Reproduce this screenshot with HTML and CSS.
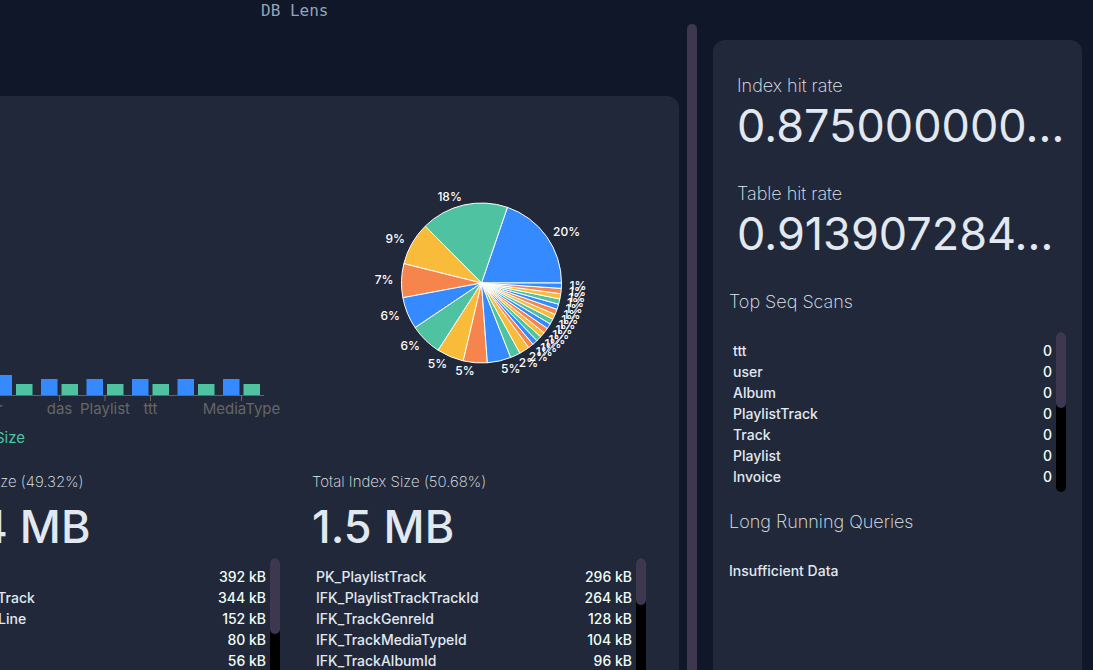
FILE: index.html
```html
<!DOCTYPE html>
<html lang="en">
<head>
<meta charset="utf-8">
<title>DB Lens</title>
<link rel="stylesheet" href="styles.css">
</head>
<body>
<header class="titlebar">DB Lens</header>
<div class="workspace">
  <main class="main">
    <section class="card overview">
      <div class="columns">
        <svg class="chart" id="bars" viewBox="-54 112 334 358" role="img" aria-label="Table and index size per table"></svg>
        <svg class="chart" id="pie" viewBox="312 112 334 358" role="img" aria-label="Share of total size"></svg>
      </div>
      <div class="columns">
        <section>
          <h2 class="label">Table Size (49.32%)</h2>
          <p class="value">1.4 MB</p>
          <div class="list">
            <table class="rows">
              <tr><td>Track</td><td>392 kB</td></tr>
              <tr><td>PlaylistTrack</td><td>344 kB</td></tr>
              <tr><td>InvoiceLine</td><td>152 kB</td></tr>
              <tr><td>Album</td><td>80 kB</td></tr>
              <tr><td>Artist</td><td>56 kB</td></tr>
            </table>
            <div class="track"><div class="thumb"></div></div>
          </div>
        </section>
        <section>
          <h2 class="label">Total Index Size (50.68%)</h2>
          <p class="value">1.5 MB</p>
          <div class="list">
            <table class="rows">
              <tr><td>PK_PlaylistTrack</td><td>296 kB</td></tr>
              <tr><td>IFK_PlaylistTrackTrackId</td><td>264 kB</td></tr>
              <tr><td>IFK_TrackGenreId</td><td>128 kB</td></tr>
              <tr><td>IFK_TrackMediaTypeId</td><td>104 kB</td></tr>
              <tr><td>IFK_TrackAlbumId</td><td>96 kB</td></tr>
            </table>
            <div class="track"><div class="thumb thumb-short"></div></div>
          </div>
        </section>
      </div>
    </section>
  </main>
  <div class="page-scroll"></div>
  <aside class="card sidebar">
    <section class="stat">
      <h2 class="heading">Index hit rate</h2>
      <p class="rate">0.875000000…</p>
    </section>
    <section class="stat">
      <h2 class="heading">Table hit rate</h2>
      <p class="rate">0.913907284…</p>
    </section>
    <h2 class="heading">Top Seq Scans</h2>
    <div class="list">
      <table class="rows">
        <tr><td>ttt</td><td>0</td></tr>
        <tr><td>user</td><td>0</td></tr>
        <tr><td>Album</td><td>0</td></tr>
        <tr><td>PlaylistTrack</td><td>0</td></tr>
        <tr><td>Track</td><td>0</td></tr>
        <tr><td>Playlist</td><td>0</td></tr>
        <tr><td>Invoice</td><td>0</td></tr>
      </table>
      <div class="track"><div class="thumb"></div></div>
    </div>
    <h2 class="heading">Long Running Queries</h2>
    <p class="empty">Insufficient Data</p>
  </aside>
</div>
<script src="charts.js"></script>
</body>
</html>
```
FILE: styles.css
```css
* { box-sizing: border-box; }
body {
  margin: 0;
  height: 100vh;
  overflow: hidden;
  display: flex;
  flex-direction: column;
  background: #101729;
  color: #e2e8f0;
  font-family: Inter, "Liberation Sans", sans-serif;
}
h2, p { margin: 0; }
.titlebar {
  height: 24px;
  padding-left: 261px;
  font: 16px/22px "DejaVu Sans Mono", monospace;
  color: #94a3b8;
}
.workspace { flex: 1; min-height: 0; display: flex; }
.main { flex: 1; min-width: 0; padding: 72px 8px 0 0; overflow: hidden; }
.card { background: #20283a; border-radius: 12px; }
.overview { margin-left: -86px; padding: 16px 33px 32px 32px; }
.columns { display: grid; grid-template-columns: 1fr 1fr; gap: 32px; }
.chart { display: block; width: 100%; height: 358px; overflow: visible; }
.label { font-size: 15px; line-height: 24px; font-weight: 200; }
.value { padding-top: 2px; font-size: 45px; line-height: 62px; font-weight: 500; }
.list { display: flex; height: 160px; overflow: hidden; }
.rows {
  flex: 1;
  align-self: flex-start;
  margin-top: 8px;
  border-spacing: 0;
  font-size: 14px;
  line-height: 21px;
  font-weight: 500;
}
.rows td { padding: 0 4px; }
.rows td:last-child { text-align: right; color: #f0fdf4; }
.track { width: 10px; border-radius: 5px; background: #000; }
.thumb { height: 76px; border-radius: 5px; background: #3d3850; }
.thumb-short { height: 47px; }
.page-scroll { width: 10px; border-radius: 5px 5px 0 0; background: #3d3850; }
.sidebar { width: 369px; margin: 16px 11px 0 16px; padding: 32px 16px; border-radius: 12px 12px 0 0; }
.stat { padding: 0 8px; margin-bottom: 28px; }
.heading { font-size: 18px; line-height: 28px; font-weight: 200; }
.rate { font-size: 45px; line-height: 52px; font-weight: 400; white-space: nowrap; }
.sidebar .list { margin: 16px 0; }
.empty { margin-top: 24px; font-size: 14px; line-height: 21px; font-weight: 500; }
.slice { stroke: #fff; stroke-width: 1; }
.slice-label { font-size: 12px; font-weight: 500; fill: #fff; }
.axis { stroke: #666; stroke-width: 1; }
.axis-label { font-size: 15px; fill: #666; text-anchor: middle; }
.legend { font-size: 15px; fill: #4fc3a1; text-anchor: end; }
```
FILE: charts.js
```js
const BLUE = "#368aff", GREEN = "#4fc3a1", YELLOW = "#f8bc3a", ORANGE = "#f5854d";

function add(parent, name, attrs, text) {
  const el = document.createElementNS("http://www.w3.org/2000/svg", name);
  for (const key in attrs) el.setAttribute(key, attrs[key]);
  if (text) el.textContent = text;
  parent.appendChild(el);
}

// Pie: slice sizes in degrees, counter-clockwise from three o'clock
const pie = document.getElementById("pie");
const sizes = [71.1, 63.6, 31.3, 24.6, 23.3, 23.3, 19.6, 17.4, 17.2, 7.3, 7.5];
while (sizes.length < 25) sizes.push(53.8 / 14);
const colors = [BLUE, GREEN, YELLOW, ORANGE];
const cx = 481.5, cy = 283, r = 80;
const point = (deg, radius) => {
  const a = deg * Math.PI / 180;
  return [cx + radius * Math.cos(a), cy - radius * Math.sin(a)];
};
let start = 0;
const labels = [];
sizes.forEach((size, i) => {
  const a = point(start, r), b = point(start + size, r);
  add(pie, "path", {
    class: "slice", fill: colors[i % 4],
    d: `M${cx},${cy}L${a}A${r},${r} 0 0 0 ${b}Z`
  });
  const [x, y] = point(start + size / 2, 88);
  labels.push([x, y, Math.round(size / 3.6) + "%"]);
  start += size;
});
labels.forEach(([x, y, text]) => add(pie, "text", {
  class: "slice-label", x, y: y + 4, "text-anchor": x > cx ? "start" : "end"
}, text));

// Bars: each table has a table-size and an index-size bar
const bars = document.getElementById("bars");
const names = ["user", "das", "Playlist", "ttt", "", "MediaType"];
add(bars, "path", { class: "axis", d: "M-54,395.5H264" });
names.forEach((name, i) => {
  const mid = 14 + 45.5 * i;
  const h = i === 0 ? 20 : 16;
  add(bars, "rect", { x: mid - 18.5, y: 395 - h, width: 16.5, height: h, fill: BLUE });
  add(bars, "rect", { x: mid + 2, y: 384, width: 16.5, height: 11, fill: GREEN });
  if (!name) return;
  if (i) add(bars, "path", { class: "axis", d: `M${mid},395V401` });
  add(bars, "text", { class: "axis-label", x: i ? mid : -13, y: 414 }, name);
});
add(bars, "text", { class: "legend", x: 25, y: 443 }, "Index Size");
```
